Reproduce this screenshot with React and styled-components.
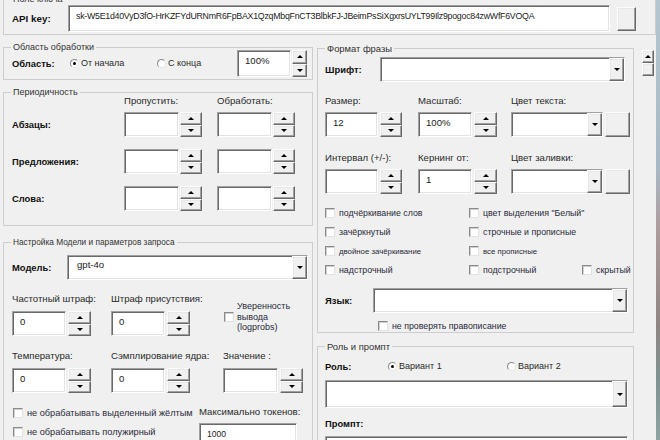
import React from 'react';
import styled, { createGlobalStyle, css } from 'styled-components';

const GlobalStyle = createGlobalStyle`
  html, body {
    margin: 0;
    height: 100%;
  }
  body {
    overflow: hidden;
    background: linear-gradient(180deg, #b6c6d0 0%, #a8b9c5 38%, #ae9c9d 52%, #8f8583 74%, #7f9291 86%, #90a3a3 100%);
    font-family: "Liberation Sans", Arial, sans-serif;
    font-size: 9.6px;
    color: #1f1f1f;
  }
  * {
    box-sizing: border-box;
  }
`;

// classic 3D edges
const raised = css`
  background: #f0f0f0;
  border: 1px solid;
  border-color: #fcfcfc #696969 #696969 #fcfcfc;
  box-shadow: inset -1px -1px 0 #a0a0a0, inset 1px 1px 0 #e8e8e8;
`;

const sunken = css`
  background: #fff;
  border: 1px solid;
  border-color: #a0a0a0 #fff #fff #a0a0a0;
  box-shadow: inset 1px 1px 0 #696969, inset -1px -1px 0 #e3e3e3;
`;

const Window = styled.div`
  width: 656px;
  height: 440px;
  overflow: hidden;
  background: #f0f0f0;
  padding-left: 3px;
`;

const Group = styled.div`
  position: relative;
  border: 1px solid #cdcdcd;
  padding: ${p => p.$pad};
  margin-top: ${p => p.$mt || 0}px;
`;

const Caption = styled.span`
  position: absolute;
  top: -7px;
  left: 7px;
  padding: 0 2px;
  background: #f0f0f0;
  line-height: 13px;
  font-size: ${p => p.$fs || 9}px;
  color: #333;
  white-space: nowrap;
`;

const Bold = styled.span`
  font-weight: bold;
  font-size: 9.4px;
  color: #111;
  line-height: ${p => p.$lh || 13}px;
  white-space: nowrap;
`;

const Text = styled.span`
  line-height: 13px;
  font-size: ${p => p.$fs || 9.6}px;
  white-space: nowrap;
  color: #2a2a2a;
`;

const TextBox = styled.div`
  ${sunken}
  width: ${p => p.$w}px;
  height: ${p => p.$h || 25}px;
  padding: ${p => p.$pt || 3}px 7px 0;
  line-height: 13px;
  font-size: ${p => p.$fs || 9.6}px;
  letter-spacing: ${p => p.$ls || 0}px;
  white-space: nowrap;
  overflow: hidden;
  color: #222;
`;

const Spinner = styled.div`
  display: flex;
  flex-direction: column;
  width: ${p => p.$w}px;
  height: ${p => p.$h || 25}px;
  margin-left: ${p => p.$gap}px;
`;

const SpinButton = styled.div`
  ${raised}
  flex: 1;
  display: flex;
  align-items: center;
  justify-content: center;
`;

const Arrow = styled.span`
  width: 0;
  height: 0;
  border-left: 3px solid transparent;
  border-right: 3px solid transparent;
  ${p => (p.$down ? 'border-top: 3px solid #000;' : 'border-bottom: 3px solid #000;')}
`;

const SpinRow = styled.div`
  display: flex;
`;

const SpinField = ({ value, w = 54, sw = 23, gap = 2, h = 25 }) => (
  <SpinRow>
    <TextBox $w={w} $h={h}>{value}</TextBox>
    <Spinner $w={sw} $h={h} $gap={gap}>
      <SpinButton><Arrow /></SpinButton>
      <SpinButton><Arrow $down /></SpinButton>
    </Spinner>
  </SpinRow>
);

const ComboFrame = styled.div`
  ${sunken}
  display: flex;
  width: ${p => p.$w}px;
  height: ${p => p.$h || 25}px;
  margin-top: ${p => p.$mt || 0}px;
`;

const ComboText = styled.div`
  flex: 1;
  padding: 2px 9px 0;
  line-height: 13px;
  color: #222;
`;

const DropButton = styled.div`
  ${raised}
  width: 15px;
  display: flex;
  align-items: center;
  justify-content: center;
`;

const Combo = ({ w, h, mt, value }) => (
  <ComboFrame $w={w} $h={h} $mt={mt}>
    <ComboText>{value}</ComboText>
    <DropButton><Arrow $down /></DropButton>
  </ComboFrame>
);

const SquareButton = styled.div`
  ${raised}
  width: ${p => p.$w}px;
  height: ${p => p.$h}px;
  margin-left: ${p => p.$ml || 0}px;
`;

const CheckLine = styled.div`
  display: flex;
  align-items: center;
  gap: 4px;
  height: 12px;
  margin-left: ${p => p.$ml || 0}px;
`;

const CheckBox = styled.span`
  flex: none;
  width: 10px;
  height: 10px;
  background: #fff;
  border: 1px solid;
  border-color: #8a8a8a #e2e2e2 #e2e2e2 #8a8a8a;
  box-shadow: inset 1px 1px 0 #cfcfcf;
`;

const CheckText = styled.span`
  font-size: ${p => p.$fs}px;
  white-space: nowrap;
  color: #2a2a3a;
`;

const Check = ({ children, fs = 8.8, ml }) => (
  <CheckLine $ml={ml}>
    <CheckBox />
    <CheckText $fs={fs}>{children}</CheckText>
  </CheckLine>
);

const RadioLine = styled.div`
  display: flex;
  align-items: center;
  gap: 2px;
  height: 13px;
`;

const RadioDot = styled.span`
  flex: none;
  width: 9px;
  height: 9px;
  border-radius: 50%;
  background: #fff;
  border: 1px solid;
  border-color: #8a8a8a #e6e6e6 #e6e6e6 #8a8a8a;
  display: flex;
  align-items: center;
  justify-content: center;
  &::after {
    content: '';
    width: 3px;
    height: 3px;
    border-radius: 50%;
    background: ${p => (p.$on ? '#000' : 'transparent')};
  }
`;

const Radio = ({ on, children }) => (
  <RadioLine>
    <RadioDot $on={on} />
    <Text $fs={9}>{children}</Text>
  </RadioLine>
);

/* top: key */
const KeyRow = styled.div`
  display: flex;
  align-items: center;
  height: 27px;
`;

const KeyLabel = styled(Bold)`
  width: 56px;
  font-size: 9.8px;
`;

/* columns */
const Columns = styled.div`
  display: grid;
  grid-template-columns: 310px 317px 1fr;
  column-gap: 4px;
  margin-top: 12px;
`;

const Column = styled.div`
  display: flex;
  flex-direction: column;
  margin-top: ${p => p.$mt || 0}px;
`;

const AreaRow = styled.div`
  display: grid;
  grid-template-columns: 58px 87px 80px 71px;
  align-items: center;
  height: 27px;
`;

const PeriodGrid = styled.div`
  display: grid;
  grid-template-columns: 112px 93px 93px;
  grid-template-rows: 18px 37px 37px 25px;
  align-items: start;
`;

const RowGrid = styled.div`
  display: grid;
  grid-template-columns: ${p => p.$cols};
  align-items: center;
  margin-top: ${p => p.$mt || 0}px;
`;

const FieldGrid = styled.div`
  display: grid;
  grid-template-columns: ${p => p.$cols};
  row-gap: ${p => p.$rowGap}px;
  align-items: start;
  margin-top: ${p => p.$mt || 0}px;
`;

const Field = styled.div`
  display: flex;
  flex-direction: column;
  gap: ${p => p.$gap}px;
`;

const LogprobsCheck = styled.div`
  display: flex;
  align-items: center;
  gap: 3px;
  margin: 9px 0 0 1px;
  line-height: 10.5px;
  font-size: 9px;
  color: #2a2a3a;
`;

const CheckStack = styled.div`
  display: flex;
  flex-direction: column;
  gap: 7px;
  padding-top: 2px;
`;

const CheckGrid = styled.div`
  display: grid;
  grid-template-columns: 144px 113px 1fr;
  grid-auto-rows: 12px;
  row-gap: 7px;
  margin-top: 13px;
`;

const Spacer = styled.div`
  height: ${p => p.$h}px;
`;

const ColorPick = styled.div`
  display: flex;
`;

const ScrollStub = styled.div`
  display: flex;
  flex-direction: column;
  width: 12px;
  margin: 3px 0 0 4px;
`;

const ScrollPart = styled.div`
  ${raised}
  height: 13px;
  display: flex;
  align-items: center;
  justify-content: center;
`;

const Label = ({ children }) => <Text>{children}</Text>;

const App = () => (
  <>
    <GlobalStyle />
    <Window>
      <Group $mt={-1} $pad="5px 0 2px 8px">
        <Caption>Поле ключа</Caption>
        <KeyRow>
          <KeyLabel>API key:</KeyLabel>
          <TextBox $w={542} $h={27} $fs={8.8} $ls={-0.25} $pt={4}>
            sk-W5E1d40VyD3fO-HrKZFYdURNmR6FpBAX1QzqMbqFnCT3BlbkFJ-JBeimPsSiXgxrsUYLT99Ilz9pogoc84zwWfF6VOQA
          </TextBox>
          <SquareButton $w={19} $h={24} $ml={7} />
        </KeyRow>
      </Group>

      <Columns>
        <Column>
          <Group $pad="2px 4px 2px 8px">
            <Caption>Область обработки</Caption>
            <AreaRow>
              <Bold>Область:</Bold>
              <Radio on>От начала</Radio>
              <Radio>С конца</Radio>
              <SpinField value="100%" w={54} sw={15} gap={1} h={27} />
            </AreaRow>
          </Group>

          <Group $mt={12} $pad="1px 4px 14px 8px">
            <Caption>Периодичность</Caption>
            <PeriodGrid>
              <span />
              <Label>Пропустить:</Label>
              <Label>Обработать:</Label>
              <Bold $lh={25}>Абзацы:</Bold>
              <SpinField w={55} sw={22} gap={1} />
              <SpinField w={55} sw={22} gap={1} />
              <Bold $lh={25}>Предложения:</Bold>
              <SpinField w={55} sw={22} gap={1} />
              <SpinField w={55} sw={22} gap={1} />
              <Bold $lh={25}>Слова:</Bold>
              <SpinField w={55} sw={22} gap={1} />
              <SpinField w={55} sw={22} gap={1} />
            </PeriodGrid>
          </Group>

          <Group $mt={16} $pad="12px 4px 0 8px">
            <Caption $fs={8.3}>Настройка Модели и параметров запроса</Caption>
            <RowGrid $cols="55px 241px">
              <Bold>Модель:</Bold>
              <Combo w={241} value="gpt-4o" />
            </RowGrid>
            <FieldGrid $cols="99px 112px 1fr" $rowGap={13} $mt={12}>
              <Field $gap={6}>
                <Label>Частотный штраф:</Label>
                <SpinField value="0" />
              </Field>
              <Field $gap={6}>
                <Label>Штраф присутствия:</Label>
                <SpinField value="0" />
              </Field>
              <LogprobsCheck>
                <CheckBox />
                <span>Уверенность<br />вывода<br />(logprobs)</span>
              </LogprobsCheck>
              <Field $gap={6}>
                <Label>Температура:</Label>
                <SpinField value="0" />
              </Field>
              <Field $gap={6}>
                <Label>Сэмплирование ядра:</Label>
                <SpinField value="0" />
              </Field>
              <Field $gap={6}>
                <Label>Значение :</Label>
                <SpinField w={55} />
              </Field>
            </FieldGrid>
            <FieldGrid $cols="187px 1fr" $rowGap={0} $mt={12}>
              <CheckStack>
                <Check ml={1} fs={9.2}>не обрабатывать выделенный жёлтым</Check>
                <Check ml={1} fs={9.2}>не обрабатывать полужирный</Check>
              </CheckStack>
              <Field $gap={5}>
                <Label>Максимально токенов:</Label>
                <TextBox $w={98} $h={25} $fs={8.6} $pt={4}>1000</TextBox>
              </Field>
            </FieldGrid>
          </Group>
        </Column>

        <Column $mt={1}>
          <Group $pad="8px 4px 0 7px">
            <Caption $fs={9.4}>Формат фразы</Caption>
            <RowGrid $cols="55px 245px">
              <Bold>Шрифт:</Bold>
              <Combo w={245} />
            </RowGrid>
            <FieldGrid $cols="93px 93px 1fr" $rowGap={14} $mt={12}>
              <Field $gap={5}>
                <Label>Размер:</Label>
                <SpinField value="12" w={53} sw={22} />
              </Field>
              <Field $gap={5}>
                <Label>Масштаб:</Label>
                <SpinField value="100%" w={54} sw={23} />
              </Field>
              <Field $gap={5}>
                <Label>Цвет текста:</Label>
                <ColorPick>
                  <Combo w={92} />
                  <SquareButton $w={25} $h={25} $ml={2} />
                </ColorPick>
              </Field>
              <Field $gap={5}>
                <Label>Интервал (+/-):</Label>
                <SpinField w={53} sw={22} />
              </Field>
              <Field $gap={5}>
                <Label>Кернинг от:</Label>
                <SpinField value="1" w={54} sw={23} />
              </Field>
              <Field $gap={5}>
                <Label>Цвет заливки:</Label>
                <ColorPick>
                  <Combo w={92} />
                  <SquareButton $w={25} $h={25} $ml={2} />
                </ColorPick>
              </Field>
            </FieldGrid>
            <CheckGrid>
              <Check>подчёркивание слов</Check>
              <Check>цвет выделения "Белый"</Check>
              <span />
              <Check>зачёркнутый</Check>
              <Check>строчные и прописные</Check>
              <span />
              <Check fs={7.8}>двойное зачёркивание</Check>
              <Check fs={7.8}>все прописные</Check>
              <span />
              <Check>надстрочный</Check>
              <Check>подстрочный</Check>
              <Check>скрытый</Check>
            </CheckGrid>
            <RowGrid $cols="48px 255px" $mt={12}>
              <Bold>Язык:</Bold>
              <Combo w={255} />
            </RowGrid>
            <Spacer $h={7} />
            <Check ml={53}>не проверять правописание</Check>
          </Group>

          <Group $mt={13} $pad="13px 4px 0 7px">
            <Caption $fs={9.4}>Роль и промпт</Caption>
            <RowGrid $cols="63px 119px 1fr">
              <Bold>Роль:</Bold>
              <Radio on>Вариант 1</Radio>
              <Radio>Вариант 2</Radio>
            </RowGrid>
            <Combo w={303} h={28} mt={7} />
            <Spacer $h={9} />
            <Bold>Промпт:</Bold>
            <Spacer $h={6} />
            <TextBox $w={303} $h={40} />
          </Group>
        </Column>

        <ScrollStub>
          <ScrollPart><Arrow /></ScrollPart>
          <ScrollPart />
        </ScrollStub>
      </Columns>
    </Window>
  </>
);

export default App;
